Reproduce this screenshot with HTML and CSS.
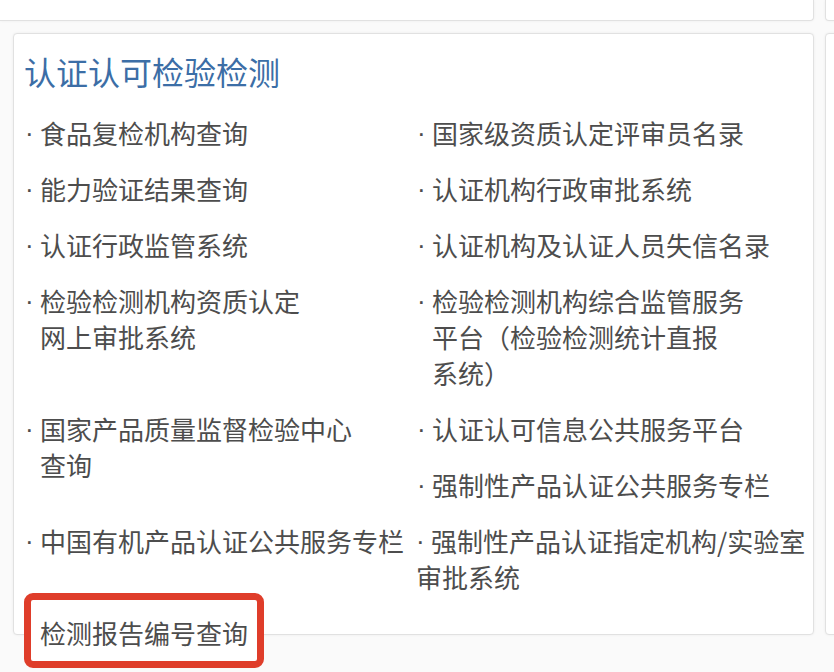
FILE: index.html
```html
<!DOCTYPE html>
<html lang="zh-CN">
<head>
<meta charset="utf-8">
<title>认证认可检验检测</title>
<link rel="stylesheet" href="styles.css">
</head>
<body>
<div class="row-top">
  <div class="card card-top"></div>
  <div class="card card-side"></div>
</div>
<div class="row-main">
  <section class="card card-main">
    <h2 class="title">认证认可检验检测</h2>
    <div class="grid">
      <div class="cell"><div class="item"><span class="dot">·</span><span class="txt">食品复检机构查询</span></div></div>
      <div class="cell"><div class="item"><span class="dot">·</span><span class="txt">国家级资质认定评审员名录</span></div></div>

      <div class="cell"><div class="item"><span class="dot">·</span><span class="txt">能力验证结果查询</span></div></div>
      <div class="cell"><div class="item"><span class="dot">·</span><span class="txt">认证机构行政审批系统</span></div></div>

      <div class="cell"><div class="item"><span class="dot">·</span><span class="txt">认证行政监管系统</span></div></div>
      <div class="cell"><div class="item"><span class="dot">·</span><span class="txt">认证机构及认证人员失信名录</span></div></div>

      <div class="cell"><div class="item"><span class="dot">·</span><span class="txt">检验检测机构资质认定<br>网上审批系统</span></div></div>
      <div class="cell"><div class="item"><span class="dot">·</span><span class="txt">检验检测机构综合监管服务<br>平台（检验检测统计直报<br>系统）</span></div></div>

      <div class="cell"><div class="item"><span class="dot">·</span><span class="txt">国家产品质量监督检验中心<br>查询</span></div></div>
      <div class="cell">
        <div class="item"><span class="dot">·</span><span class="txt">认证认可信息公共服务平台</span></div>
        <div class="item"><span class="dot">·</span><span class="txt">强制性产品认证公共服务专栏</span></div>
      </div>

      <div class="cell"><div class="item"><span class="dot">·</span><span class="txt">中国有机产品认证公共服务专栏</span></div></div>
      <div class="cell"><div class="item item-flow"><span class="dot">·</span>强制性产品认证指定机构/实验室<br>审批系统</div></div>

      <div class="cell"><div class="item highlight"><span class="dot">·</span><span class="txt">检测报告编号查询</span></div></div>
    </div>
  </section>
  <div class="card card-side"></div>
</div>
</body>
</html>
```
FILE: styles.css
```css
html {
  overflow: hidden;
  background: #fafafa;
}

body {
  margin: 0;
  padding: 0;
  min-height: 672px;
  font-family: "Noto Sans CJK SC", "Noto Sans", sans-serif;
}

.card {
  background: #fff;
  border: 1px solid #e1e1e1;
  border-radius: 4px;
  box-shadow: 0 0 3px rgba(0, 0, 0, 0.06);
  box-sizing: border-box;
}

.row-top {
  display: flex;
  gap: 11px;
  height: 21px;
}

.card-top {
  flex: 0 0 814px;
  border-top: 0;
  border-left: 0;
  border-radius: 0 0 4px 0;
}

.card-side {
  flex: 0 0 200px;
}

.row-top .card-side {
  border-top: 0;
  border-radius: 0 0 0 4px;
}

.row-main {
  display: flex;
  gap: 11px;
  margin-top: 12px;
  padding-left: 13px;
}

.row-main .card-side {
  height: 602px;
}

.card-main {
  flex: 0 0 800px;
  height: 602px;
  padding: 17px 4px 0 10px;
}

.title {
  margin: 0;
  font-size: 32px;
  line-height: 40px;
  font-weight: 400;
  color: #3c6ea6;
}

.grid {
  display: grid;
  grid-template-columns: 392px 392px;
  row-gap: 20px;
  margin-top: 24px;
  margin-left: 1px;
}

.cell {
  display: flex;
  flex-direction: column;
  gap: 20px;
  align-items: flex-start;
}

.item {
  display: flex;
  font-size: 26px;
  line-height: 36px;
  color: #4d4d4d;
  white-space: nowrap;
}

.dot {
  flex: 0 0 15px;
  width: 15px;
  height: 36px;
  display: inline-block;
  font-family: "Liberation Sans", sans-serif;
  line-height: 36px;
  vertical-align: top;
  overflow: hidden;
}

.item-flow {
  display: block;
  margin-left: -1px;
}

.highlight {
  position: relative;
  z-index: 0;
}

.highlight .dot {
  visibility: hidden;
}

.highlight::before {
  content: "";
  position: absolute;
  top: -22px;
  bottom: -17px;
  left: -1px;
  right: -16px;
  border: 7px solid #df3d2a;
  border-radius: 9px;
  background: #fff;
  z-index: -1;
}
```
